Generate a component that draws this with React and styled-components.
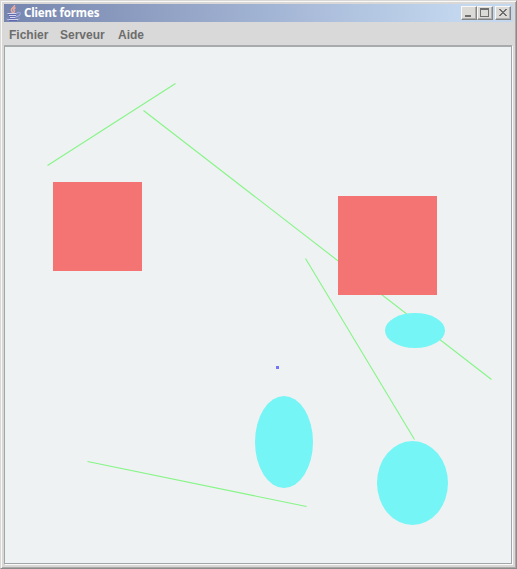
import React from "react";
import styled, { createGlobalStyle } from "styled-components";

const GlobalStyle = createGlobalStyle`
  * { box-sizing: border-box; }
  body { margin: 0; overflow: hidden; }
`;

const Window = styled.div`
  width: 517px;
  height: 569px;
  display: flex;
  flex-direction: column;
  padding: 3px;
  background: #d9d8d6;
  border: 1px solid #d9d8d6;
  border-right-color: #8b8b8b;
  border-bottom-color: #8b8b8b;
  box-shadow: inset 1px 1px #f8f8f7, inset -1px -1px #a9a9a9;
`;

const TitleBar = styled.header`
  height: 18px;
  flex: none;
  display: flex;
  align-items: center;
  padding: 0 2px;
  background: linear-gradient(90deg, #7685ae 0%, #c3d7ef 90%);
`;

const Title = styled.h1`
  flex: 1;
  margin: 0 0 0 2px;
  color: #fff;
  font: bold 11.5px/18px "Noto Sans", "Open Sans", sans-serif;
  letter-spacing: -0.15px;
`;

const Controls = styled.div`
  display: flex;
`;

const ControlButton = styled.button`
  width: 16px;
  height: 14px;
  padding: 0;
  display: block;
  margin-left: ${(p) => p.$gap || 0}px;
  border: 1px solid #f8f8f7;
  border-right-color: #858585;
  border-bottom-color: #858585;
  box-shadow: inset -1px -1px #b0afad;
  background: #dcdad6;
  svg { display: block; }
`;

const MenuBar = styled.nav`
  height: 23px;
  flex: none;
  display: flex;
  align-items: center;
  padding: 2px 0 0 5px;
  background: #d9d9d9;
`;

const MenuItem = styled.span`
  width: ${(p) => p.$width}px;
  color: #6d6d6d;
  font: bold 12px/16px "Liberation Sans", Arial, sans-serif;
`;

const CanvasFrame = styled.main`
  flex: 1;
  min-height: 0;
  border: 1px solid #a1a6a8;
  border-top: 2px solid #a8abac;
  margin: 0 1px 1px 0;
  background: #eef2f3;
  box-shadow: 1px 1px #fafafa;
`;

const Drawing = styled.svg`
  display: block;
  width: 506px;
  height: 516px;
`;

const lines = [
  [47.5, 165.5, 175.5, 83.5],
  [143.5, 110.5, 491.5, 379.5],
  [305.5, 258.5, 414.5, 439.5],
  [87.5, 461.5, 306.5, 506.5],
];
const squares = [
  [53, 182, 89],
  [338, 196, 99],
];
const ellipses = [
  [415, 330.5, 30, 17.5],
  [284, 442, 29, 46],
  [412.5, 483, 35.5, 42],
];

function JavaIcon() {
  return (
    <svg width="16" height="16" viewBox="0 0 16 16" fill="none">
      <path d="M8.5 0C9.2 2 4.5 3.2 5.5 5.5L6.5 8M9.5 2.5C7 4 7.5 5 8.5 6L7.5 8" stroke="#f0ab9f" strokeWidth="1.5" />
      <path d="M1.5 8.5H10.5M3 10.5H10M4 12.5H9.5M1 14.5H12" stroke="#d2d2ed" strokeWidth="1.2" />
      <path d="M2 9.5H10M3 11.5H9.5M3.5 13.5H9.5M3 15.5H11" stroke="#6068b2" strokeWidth="1" />
      <path d="M10.5 8C15.5 6 16 10 10 12" stroke="#a0a5dc" strokeWidth="1.2" />
      <path d="M0.5 13.5C0.5 14.5 2 15 3 15M12 14.5L14 13.5" stroke="#9da3d8" />
    </svg>
  );
}

function Glyph({ kind }) {
  return (
    <svg width="14" height="12" viewBox="0 0 14 12" fill="none" stroke="#6f6f6f" shapeRendering="crispEdges">
      {kind === "min" && <path d="M3 9H9" strokeWidth="2" />}
      {kind === "max" && (
        <>
          <path d="M2.5 1.5H10.5V9.5H2.5Z" />
          <path d="M2 2H11" strokeWidth="2" />
        </>
      )}
      {kind === "close" && (
        <path fill="#6f6f6f" stroke="none" d="M3 2h2v1h1v1h2v-1h1v-1h2v1h-1v1h-1v1h-1v1h1v1h1v1h1v1h-2v-1h-1v-1h-2v1h-1v1h-2v-1h1v-1h1v-1h1v-1h-1v-1h-1v-1h-1z" />
      )}
    </svg>
  );
}

export default function App() {
  return (
    <>
      <GlobalStyle />
      <Window>
        <TitleBar>
          <JavaIcon />
          <Title>Client formes</Title>
          <Controls>
            <ControlButton aria-label="Réduire"><Glyph kind="min" /></ControlButton>
            <ControlButton aria-label="Agrandir"><Glyph kind="max" /></ControlButton>
            <ControlButton aria-label="Fermer" $gap={2}><Glyph kind="close" /></ControlButton>
          </Controls>
        </TitleBar>
        <MenuBar>
          <MenuItem $width={51}>Fichier</MenuItem>
          <MenuItem $width={58}>Serveur</MenuItem>
          <MenuItem $width={40}>Aide</MenuItem>
        </MenuBar>
        <CanvasFrame>
          <Drawing viewBox="5 47 506 516">
            <g stroke="#86f586" strokeWidth="1.1">
              {lines.map(([x1, y1, x2, y2]) => (
                <line key={x1} x1={x1} y1={y1} x2={x2} y2={y2} />
              ))}
            </g>
            <g fill="#f47373">
              {squares.map(([x, y, size]) => (
                <rect key={x} x={x} y={y} width={size} height={size} />
              ))}
            </g>
            <g fill="#75f5f5">
              {ellipses.map(([cx, cy, rx, ry]) => (
                <ellipse key={cx} cx={cx} cy={cy} rx={rx} ry={ry} />
              ))}
            </g>
            <rect x="276" y="366" width="3" height="3" fill="#7575f5" />
          </Drawing>
        </CanvasFrame>
      </Window>
    </>
  );
}
